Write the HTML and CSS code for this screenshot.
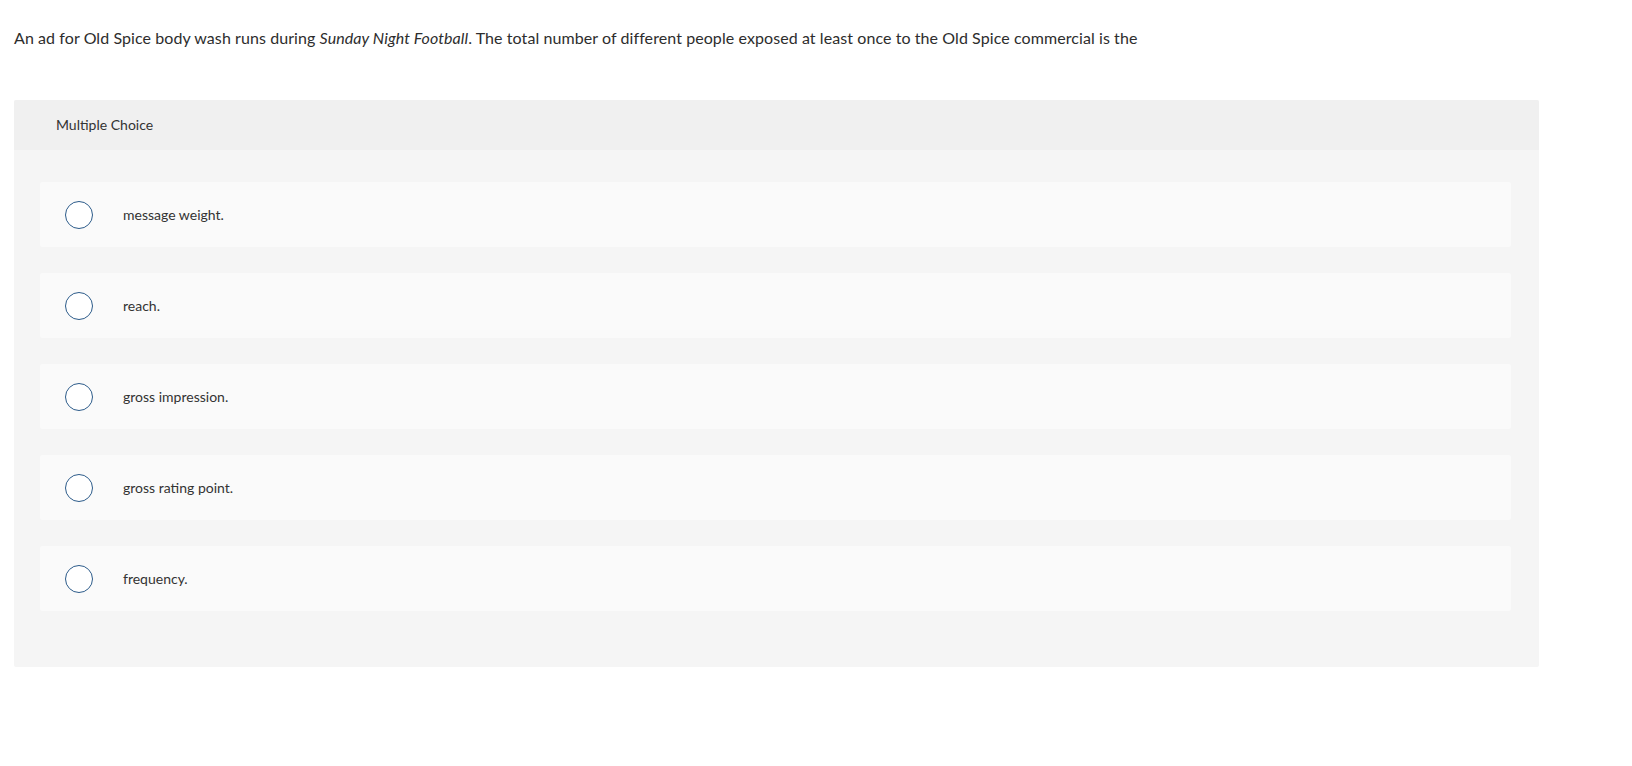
FILE: index.html
```html
<!DOCTYPE html>
<html>
<head>
<meta charset="utf-8">
<link rel="stylesheet" href="styles.css">
</head>
<body>
<div class="page">
  <p class="question">An ad for Old Spice body wash runs during <em>Sunday Night Football</em>. The total number of different people exposed at least once to the Old Spice commercial is the</p>
  <section class="mc">
    <div class="mc-header">Multiple Choice</div>
    <div class="mc-body">
      <label class="option"><span class="radio"></span><span class="opt-text">message weight.</span></label>
      <label class="option"><span class="radio"></span><span class="opt-text">reach.</span></label>
      <label class="option"><span class="radio"></span><span class="opt-text">gross impression.</span></label>
      <label class="option"><span class="radio"></span><span class="opt-text">gross rating point.</span></label>
      <label class="option"><span class="radio"></span><span class="opt-text">frequency.</span></label>
    </div>
  </section>
</div>
</body>
</html>
```

FILE: styles.css
```css
html, body {
  margin: 0;
  padding: 0;
  background: #fff;
}
body {
  font-family: Lato, "Open Sans", sans-serif;
  color: #333;
}
.page {
  padding: 0 14px;
  width: 1525px;
}
.question {
  margin: 0;
  padding-top: 28px;
  height: 100px;
  box-sizing: border-box;
  font-size: 16px;
  line-height: 20px;
  letter-spacing: 0.08px;
  color: #2d2d2d;
}
.question em {
  font-style: italic;
}
.mc {
  background: #f5f5f5;
  border-radius: 2px;
}
.mc-header {
  background: #f0f0f0;
  height: 50px;
  box-sizing: border-box;
  padding: 16px 0 0 42px;
  font-size: 14px;
  line-height: 18px;
  color: #333;
  border-radius: 2px 2px 0 0;
}
.mc-body {
  padding: 32px 28px 56px 26px;
  display: flex;
  flex-direction: column;
  gap: 26px;
}
.option {
  background: #fafafa;
  height: 65px;
  border-radius: 2px;
  display: flex;
  align-items: center;
  padding-left: 25px;
}
.radio {
  width: 28px;
  height: 28px;
  border: 1.5px solid #2c5b8a;
  border-radius: 50%;
  box-sizing: border-box;
  background: #fff;
  flex: none;
}
.opt-text {
  margin-left: 30px;
  font-size: 14px;
  line-height: 18px;
  color: #333;
}
```
